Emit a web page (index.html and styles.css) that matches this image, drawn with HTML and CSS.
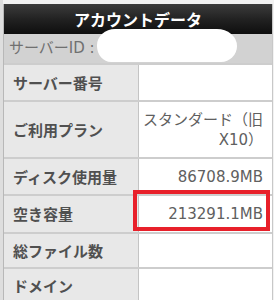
FILE: index.html
```html
<!DOCTYPE html>
<html lang="ja">
<head>
<meta charset="utf-8">
<link rel="stylesheet" href="styles.css">
</head>
<body>
<div class="frame">
  <div class="panel">
    <div class="head">アカウントデータ</div>
    <div class="sid">サーバーID :</div>
    <table class="data">
      <tr class="r37"><th>サーバー番号</th><td></td></tr>
      <tr class="r57"><th>ご利用プラン</th><td>スタンダード（旧<br>X10）</td></tr>
      <tr class="r37"><th>ディスク使用量</th><td>86708.9MB</td></tr>
      <tr class="r38"><th>空き容量</th><td>213291.1MB</td></tr>
      <tr class="r35"><th>総ファイル数</th><td></td></tr>
      <tr class="r35"><th>ドメイン</th><td></td></tr>
    </table>
    <div class="blob"></div>
    <div class="mark"></div>
  </div>
</div>
</body>
</html>
```

FILE: styles.css
```css
html, body {
  margin: 0;
  padding: 0;
  background: #ffffff;
}
body {
  width: 274px;
  height: 300px;
  overflow: hidden;
  font-family: "DejaVu Sans", "Noto Sans CJK JP", sans-serif;
}
.frame {
  padding: 4px 0 0 3px;
  background: linear-gradient(to right, #dedede 0, #dedede 3px, #f2f2f2 3px);
  height: 296px;
  width: 271px;
}
.panel {
  position: relative;
  width: 268px;
  border-left: 1px solid #b8b8b8;
  border-right: 1px solid #c8c8c8;
  background: #fff;
  height: 296px;
}
.head {
  height: 30px;
  line-height: 30px;
  background: linear-gradient(to bottom, #3c3c3c 0%, #222 50%, #0e0e0e 100%);
  color: #fff;
  font-weight: bold;
  font-size: 16px;
  text-align: center;
  font-family: "Noto Sans CJK JP", sans-serif;
}
.sid {
  height: 29px;
  line-height: 29px;
  background: #d2d2d2;
  color: #707070;
  font-size: 15px;
  padding-left: 5px;
}
.data {
  width: 268px;
  border-collapse: collapse;
  table-layout: fixed;
}
.data th, .data td {
  border-top: 2px solid #cdcdcd;
  font-size: 15px;
  padding: 0 8px;
  vertical-align: middle;
  color: #606060;
  line-height: 20px;
}
.data th {
  width: 117px;
  background: #e8e8e8;
  text-align: left;
  font-weight: bold;
  font-family: "Noto Sans CJK JP", sans-serif;
  border-right: 1px solid #c4c4c4;
  padding-left: 9px;
  color: #505050;
}
.data td {
  text-align: right;
  padding-left: 0;
  padding-right: 9px;
  white-space: nowrap;
}
.r37 { height: 37px; }
.r57 { height: 57px; }
.r38 { height: 38px; }
.r35 { height: 35px; }
.blob {
  position: absolute;
  left: 93px;
  top: 25px;
  width: 140px;
  height: 33px;
  background: #fff;
  border-radius: 18px 20px 16px 14px / 16px 17px 16px 16px;
  filter: blur(0.6px);
}
.mark {
  position: absolute;
  left: 129px;
  top: 186px;
  width: 129px;
  height: 33px;
  border: 4px solid #e8202a;
}
```
